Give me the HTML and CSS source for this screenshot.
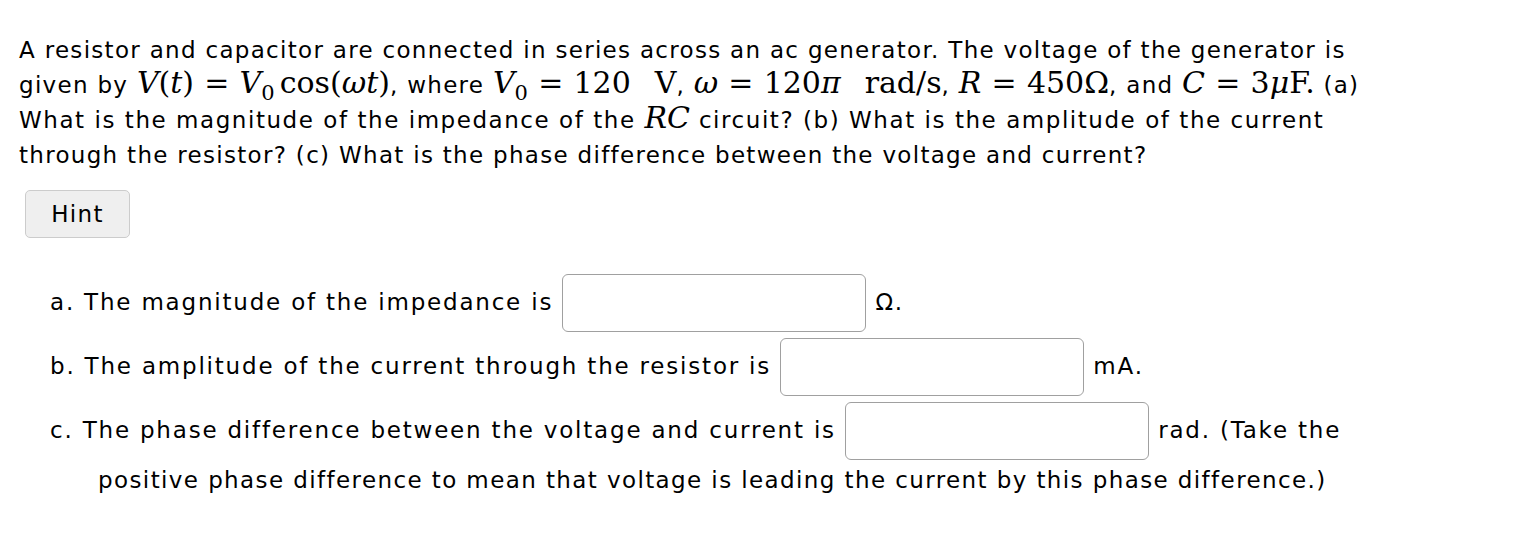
FILE: index.html
```html
<!DOCTYPE html>
<html>
<head>
<meta charset="utf-8">
<link rel="stylesheet" href="styles.css">
</head>
<body>
<div class="page">
  <p class="question">A resistor and capacitor are connected in series across an ac generator. The voltage of the generator is<br>given by <span class="m"><i>V</i>(<i>t</i>)<span class="op">=</span><i>V</i><sub>0</sub><span class="fn">cos</span>(<i>ωt</i>)</span>, where <span class="m"><i>V</i><sub>0</sub><span class="op">=</span>120<span class="quad"></span>V</span>, <span class="m"><i>ω</i><span class="op">=</span>120<i>π</i><span class="quad"></span>rad/s</span>, <span class="m"><i>R</i><span class="op">=</span>450Ω</span>, and <span class="m"><i>C</i><span class="op">=</span>3<i>μ</i>F.</span> (a)<br><span class="l3">What is the magnitude of the impedance of the <span class="m"><i>RC</i></span> circuit? (b) What is the amplitude of the current</span><br>through the resistor? (c) What is the phase difference between the voltage and current?</p>
  <button class="hint" type="button">Hint</button>
  <div class="parts">
    <div class="part">a. The magnitude of the impedance is <input class="answer" type="text"> Ω.</div>
    <div class="part">b. The amplitude of the current through the resistor is <input class="answer" type="text"> mA.</div>
    <div class="part">c. The phase difference between the voltage and current is <input class="answer" type="text"> rad. (Take the<br><span class="wrap">positive phase difference to mean that voltage is leading the current by this phase difference.)</span></div>
  </div>
</div>
</body>
</html>
```

FILE: styles.css
```css
html, body {
  margin: 0;
  padding: 0;
  background: #ffffff;
}
body {
  font-family: "DejaVu Sans", Verdana, sans-serif;
  font-size: 23px;
  letter-spacing: 1.3px;
  color: #000000;
}
.page {
  padding: 33px 19px 0 19px;
}
.question {
  margin: 0;
  line-height: 35px;
  white-space: nowrap;
}
.l3 {
  letter-spacing: 1.55px;
}
.m {
  font-family: "DejaVu Serif", "Liberation Serif", serif;
  font-size: 30px;
  letter-spacing: 0;
  line-height: 1;
}
.m i {
  font-style: italic;
}
.m sub {
  font-size: 0.7em;
  line-height: 0;
}
.op {
  margin: 0 0.34em;
}
.fn {
  margin-left: 0.17em;
}
.quad {
  display: inline-block;
  width: 0.8em;
}
.hint {
  display: block;
  margin: 17px 0 0 6px;
  width: 105px;
  height: 48px;
  background: #efefef;
  border: 1.5px solid #cccccc;
  border-radius: 5px;
  font-family: "DejaVu Sans", sans-serif;
  font-size: 23px;
  letter-spacing: 1.3px;
  color: #000000;
  padding: 0;
}
.parts {
  margin-top: 36px;
  padding-left: 31px;
}
.part {
  line-height: 35px;
  margin-bottom: 6px;
  padding-left: 48px;
  text-indent: -48px;
  white-space: nowrap;
  letter-spacing: 1.8px;
}
.wrap {
  display: inline-block;
  margin-top: 3px;
  letter-spacing: 1.4px;
  text-indent: 0;
}
.answer {
  display: inline-block;
  vertical-align: middle;
  box-sizing: border-box;
  width: 304px;
  height: 58px;
  margin: 0;
  border: 1.5px solid #a0a0a0;
  border-radius: 6px;
  background: #ffffff;
  text-indent: 0;
}
```
